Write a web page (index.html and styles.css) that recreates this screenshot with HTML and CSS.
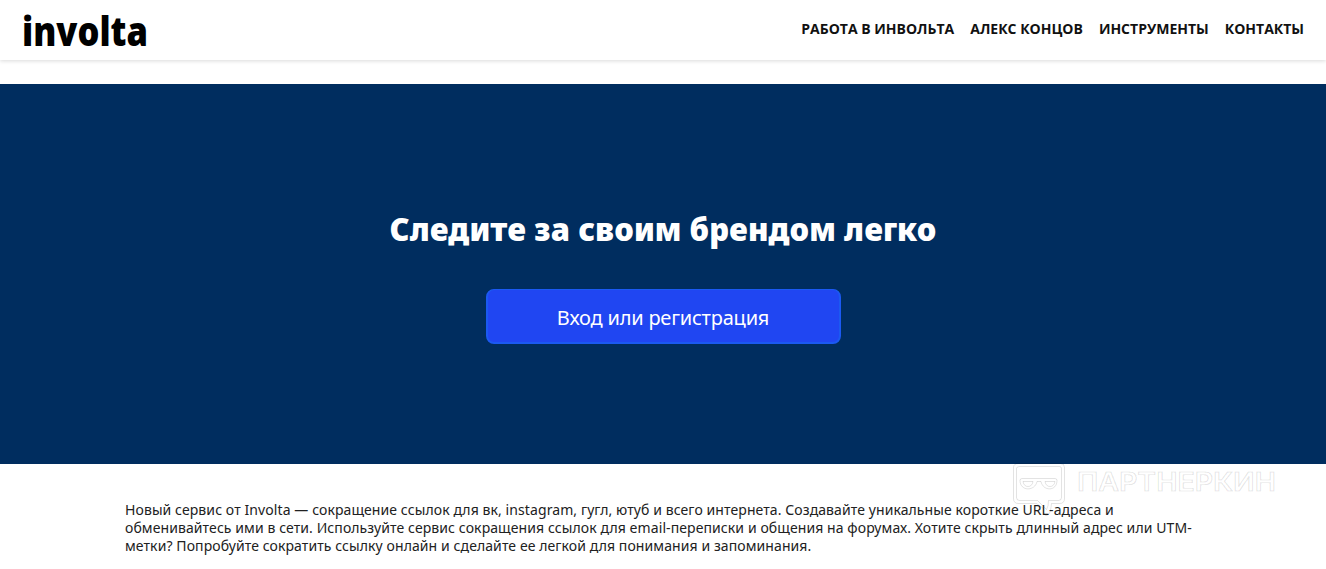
FILE: index.html
```html
<!DOCTYPE html>
<html lang="ru">
<head>
  <meta charset="UTF-8">
  <title>Involta</title>
  <link rel="stylesheet" href="styles.css">
</head>
<body>

  <header class="header">
    <a class="logo" href="#">
      <svg width="170" height="60" viewBox="0 0 170 60">
        <text class="logo-text" x="0" y="46" textLength="126" lengthAdjust="spacingAndGlyphs">involta</text>
      </svg>
    </a>
    <nav class="menu">
      <a href="#">Работа в Инвольта</a>
      <a href="#">Алекс Концов</a>
      <a href="#">Инструменты</a>
      <a href="#">Контакты</a>
    </nav>
  </header>

  <main>
    <section class="hero">
      <h1>Следите за своим брендом легко</h1>
      <a class="login-btn" href="#"><span>Вход или регистрация</span></a>
    </section>

    <section class="about">
      <p>
        <span>Новый сервис от Involta — сокращение ссылок для вк, instagram, гугл, ютуб и всего интернета. Создавайте уникальные короткие URL-адреса и</span>
        <span>обменивайтесь ими в сети. Используйте сервис сокращения ссылок для email-переписки и общения на форумах. Хотите скрыть длинный адрес или UTM-</span>
        <span>метки? Попробуйте сократить ссылку онлайн и сделайте ее легкой для понимания и запоминания.</span>
      </p>
    </section>
  </main>

  <svg class="watermark" width="290" height="60" viewBox="0 0 290 60">
    <g class="mark">
      <path d="M18.500 5.500h42q4 0 4 4v31q0 5-5 5h-8c-1 9-2 11-5 12-3 0-3-3-3-5v-2l-7-5h-18q-5 0-5-5v-31q0-4 5-4z"/>
      <path d="M19.500 8.500h40q2 0 2 2v29q0 3-3 3h-10q0 6-2 9l-9-9h-18q-3 0-3-3v-29q0-2 3-2z"/>
      <path d="M22 20.500h33q2 0 2 2c0 11-14 11-16 1h-4c-2 10-17 10-17-1q0-2 2-2z"/>
      <path d="M23 23.500h10q-1 5-5 5t-5-5zM45 23.500h10q-1 5-5 5t-5-5z"/>
    </g>
    <text class="mark-text" x="77" y="33" textLength="199" lengthAdjust="spacingAndGlyphs">ПАРТНЕРКИН</text>
  </svg>

</body>
</html>
```
FILE: styles.css
```css
* {
  box-sizing: border-box;
}

body {
  position: relative;
  height: 569px;
  margin: 0;
  overflow: hidden;
  background-color: #fff;
  color: #212121;
  font-family: "Noto Sans", "Open Sans", sans-serif;
}

a {
  color: inherit;
  text-decoration: none;
}

.header {
  display: flex;
  justify-content: space-between;
  align-items: center;
  height: 60px;
  padding: 0 22px;
  box-shadow: 0 1px 4px rgba(0, 0, 0, 0.15);
}

.logo svg {
  display: block;
}

.logo-text {
  font: 900 41px "Noto Sans", sans-serif;
  fill: #000;
}

.menu {
  display: flex;
  gap: 16px;
  padding-bottom: 4px;
  color: #111;
  font-family: "Open Sans", sans-serif;
  font-size: 14px;
  font-weight: 700;
  text-transform: uppercase;
}

.hero {
  display: flex;
  flex-direction: column;
  align-items: center;
  height: 380px;
  margin-top: 24px;
  padding-top: 123px;
  background-color: #002d5f;
  color: #fff;
}

.hero h1 {
  margin: 0;
  font-size: 31px;
  font-weight: 900;
  letter-spacing: 0.07px;
  line-height: 44px;
  white-space: nowrap;
}

.login-btn {
  display: flex;
  justify-content: center;
  align-items: center;
  width: 355px;
  height: 55px;
  margin-top: 38px;
  padding-top: 2px;
  border: 2px solid #1b59f2;
  border-top-width: 1px;
  border-radius: 8px;
  background-color: #2046f2;
  font-size: 20px;
  letter-spacing: -0.2px;
}

.about {
  padding: 37px 125px 0;
}

.about p {
  margin: 0;
  font-size: 14px;
  letter-spacing: 0.09px;
  line-height: 18px;
}

.about span {
  display: block;
  width: max-content;
  white-space: nowrap;
}

.watermark {
  position: absolute;
  top: 458px;
  left: 1000px;
}

.mark,
.mark-text {
  fill: none;
  stroke: rgba(0, 0, 0, 0.11);
  stroke-width: 1;
}

.mark-text {
  font: 600 25px Inter, "Open Sans", sans-serif;
}
```
